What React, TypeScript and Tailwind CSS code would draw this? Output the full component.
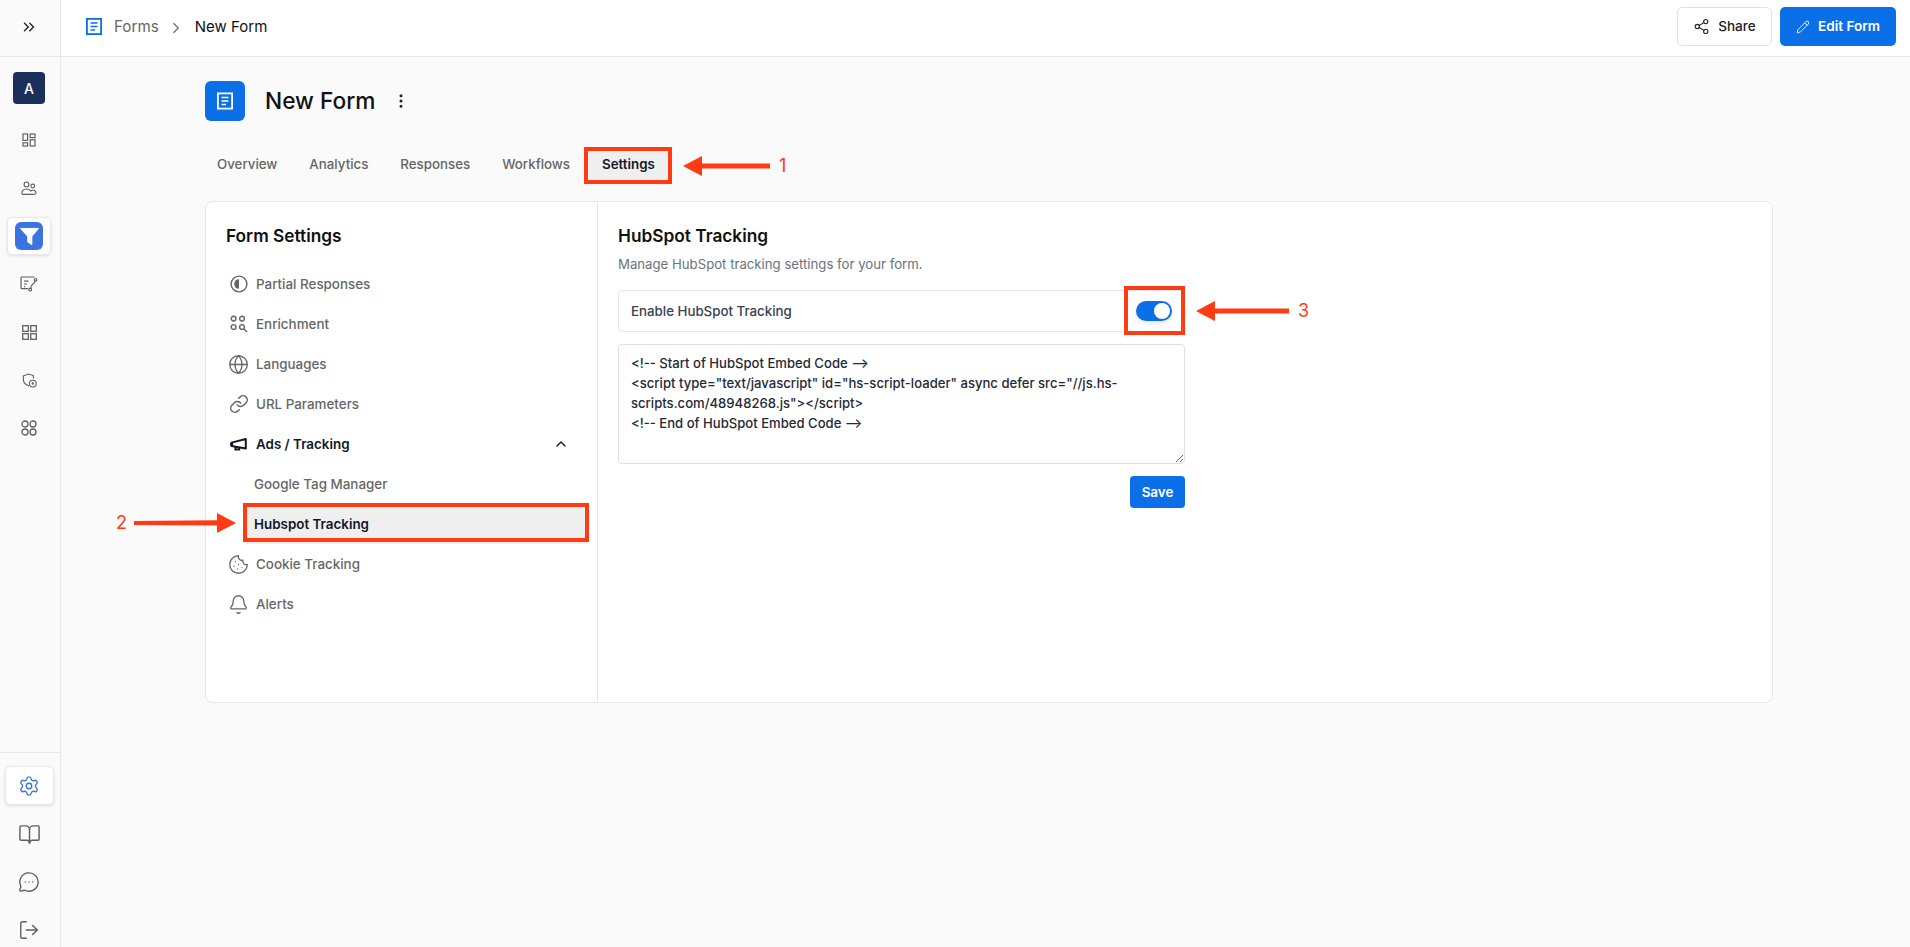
import React from 'react';
import {
  Bell,
  BookOpen,
  ChevronRight,
  ChevronUp,
  ChevronsRight,
  Cookie,
  Globe,
  Link,
  LogOut,
  MessageCircleMore,
  MoreVertical,
  Pencil,
  Settings,
  Share2,
} from 'lucide-react';

const FormDoc = ({ className }: { className?: string }) => (
  <svg viewBox="0 0 16 17" fill="none" className={className}>
    <rect x="0.9" y="0.9" width="14.2" height="15.2" stroke="currentColor" strokeWidth="1.8" />
    <path d="M4.5 5h7M4.5 8.5h7M4.5 12h4.5" stroke="currentColor" strokeWidth="1.5" />
  </svg>
);

const Dashboard = () => (
  <svg viewBox="0 0 14 14" fill="none" stroke="currentColor" strokeWidth="1.2" className="w-[14px] h-[14px]">
    <rect x="1" y="1" width="4.6" height="6.4" />
    <rect x="8.2" y="1" width="4.8" height="3.6" />
    <rect x="1" y="9.8" width="4.6" height="3.2" />
    <rect x="8.2" y="6.8" width="4.8" height="6.2" />
  </svg>
);

const People = () => (
  <svg viewBox="0 0 16 15" fill="none" stroke="currentColor" strokeWidth="1.1" className="w-[16px] h-[15px]">
    <circle cx="5.5" cy="3.4" r="2.4" />
    <circle cx="11.8" cy="5" r="1.9" />
    <path d="M1 13c-.6-3 1.6-5 4.5-5 2.2 0 3.6.8 4.2 2.4" />
    <path d="M1 13.4h9.4c1 0 4.6.2 4.6-1.4 0-1.7-1.6-2.8-3.4-2.8-1 0-1.6.3-2 .9" />
  </svg>
);

const FunnelSolid = () => (
  <svg viewBox="0 0 20 20" className="w-[19px] h-[19px]" fill="#fff">
    <path d="M0.5 1.5h19l-7 8.4v8.6l-4.4-2.6v-6z" strokeLinejoin="round" stroke="#fff" strokeWidth="1" />
  </svg>
);

const FormFlow = () => (
  <svg viewBox="0 0 18 16" fill="none" stroke="currentColor" strokeWidth="1.2" className="w-[18px] h-[16px]">
    <path d="M14.5 1H1.8a.8.8 0 0 0-.8.8v10a.8.8 0 0 0 .8.8H8" />
    <path d="M4 5.2h4.5M4 8h3M4 10.6h1" />
    <circle cx="15.6" cy="3.8" r="1.3" />
    <circle cx="10.2" cy="13.6" r="1.4" />
    <path d="M15 5.2c-.3 3-4 2.4-4.4 7" />
  </svg>
);

const Squares = () => (
  <svg viewBox="0 0 15 15" fill="none" stroke="currentColor" strokeWidth="1.3" className="w-[15px] h-[15px]">
    <rect x="0.7" y="0.7" width="5.6" height="5.6" />
    <rect x="8.7" y="0.7" width="5.6" height="5.6" />
    <rect x="0.7" y="8.7" width="5.6" height="5.6" />
    <rect x="8.7" y="8.7" width="5.6" height="5.6" />
  </svg>
);

const ShieldDot = () => (
  <svg viewBox="0 0 15 15" fill="none" stroke="currentColor" strokeWidth="1.1" className="w-[15px] h-[15px]">
    <path d="M7 13c-3-1-5.6-2.8-5.6-6.4V2.8L6.6 1l4.8 1.6v3" />
    <circle cx="10.8" cy="10.6" r="3.4" />
    <circle cx="10.8" cy="10.6" r=".7" />
  </svg>
);

const FourCircles = () => (
  <svg viewBox="0 0 16 16" fill="none" stroke="currentColor" strokeWidth="1.3" className="w-[16px] h-[16px]">
    <circle cx="4" cy="4" r="3" />
    <circle cx="12" cy="4" r="3" />
    <circle cx="4" cy="12" r="3" />
    <circle cx="12" cy="12" r="3" />
  </svg>
);

const HalfCircle = () => (
  <svg viewBox="0 0 18 18" fill="none" className="w-[18px] h-[18px]">
    <circle cx="9" cy="9" r="7.9" stroke="currentColor" strokeWidth="1.4" />
    <path d="M9 4.2a4.8 4.8 0 0 0 0 9.6z" fill="currentColor" />
  </svg>
);

const Enrichment = () => (
  <svg viewBox="0 0 18 18" fill="none" stroke="currentColor" strokeWidth="1.4" className="w-[18px] h-[18px]">
    <circle cx="3.6" cy="3.6" r="2.4" />
    <circle cx="12" cy="3.6" r="2.4" />
    <circle cx="3.6" cy="12" r="2.4" />
    <circle cx="12" cy="12" r="2.4" />
    <path d="M14 14l3 3" />
  </svg>
);

const Horn = () => (
  <svg viewBox="0 0 18 18" fill="none" stroke="currentColor" strokeWidth="2" className="w-[18px] h-[18px]">
    <path d="M1.6 7.6 15.8 4v9.6L1.6 11z" strokeLinejoin="round" />
    <path d="M1.6 8v3" strokeWidth="3" />
    <path d="M5.4 11.8v2.6h3.8v-1.4" />
  </svg>
);

const navItem = 'flex h-10 items-center text-[13.4px] font-medium text-[#666666]';
const navIcon = 'ml-[1px] mr-[6px] flex w-[23px] justify-center';
const railIcon = 'flex h-12 items-center justify-center text-[#5f5f64]';

const ArrowLeft = ({ width }: { width: number }) => (
  <svg width={width} height="20" viewBox={`0 0 ${width} 20`} fill="#ff3b14">
    <path d={`M0 10 19 0v7.4L${width} 7.6v5L19 12.6V20z`} />
  </svg>
);

const ArrowRight = () => (
  <svg width="102" height="20" viewBox="0 0 102 20" fill="#ff3b14">
    <path d="M0 8 83 7.2V0l19 10-19 10v-7.4L0 12z" />
  </svg>
);

export default function App() {
  return (
    <div className="relative flex h-[947px] w-[1910px] overflow-hidden bg-[#fafafa] font-['Inter',sans-serif] text-[#111111]">
      {/* rail */}
      <aside className="flex h-full w-[61px] shrink-0 flex-col border-r border-[#e8e8ea] bg-[#fafafa]">
        <div className="flex h-[57px] shrink-0 items-center justify-center border-b border-[#e8e8ea] pb-[3px] pr-[2px]">
          <ChevronsRight className="h-[18px] w-[18px] text-[#1f2937]" strokeWidth={2} />
        </div>
        <div className="flex flex-col items-center pr-[2px] pt-[15px]">
          <div className="flex h-8 w-8 items-center justify-center rounded-[4px] bg-[#1b2f5b] text-[14px] font-medium text-white">A</div>
          <div className="mt-[12px] flex w-full flex-col">
            <div className={railIcon}><Dashboard /></div>
            <div className={railIcon}><People /></div>
          </div>
          <div className="mt-[5px] flex h-[38px] w-[44px] items-center justify-center rounded-[5px] border border-[#e8e8ea] bg-white shadow-[0_1px_3px_rgba(0,0,0,0.12)]">
            <div className="flex h-7 w-7 items-center justify-center rounded-[6px] bg-[#3b73e0]"><FunnelSolid /></div>
          </div>
          <div className="mt-[5px] flex w-full flex-col">
            <div className={railIcon}><FormFlow /></div>
            <div className={railIcon}><Squares /></div>
            <div className={railIcon}><ShieldDot /></div>
            <div className={railIcon}><FourCircles /></div>
          </div>
        </div>
        <div className="mt-auto flex h-[195px] flex-col items-center overflow-hidden border-t border-[#e8e8ea] pr-[2px] pt-[13px]">
          <div className="flex h-[39px] w-[49px] shrink-0 items-center justify-center rounded-[5px] border border-[#e8e8ea] bg-white shadow-[0_1px_3px_rgba(0,0,0,0.12)]">
            <Settings className="h-[22px] w-[22px] text-[#3b73e0]" strokeWidth={1.5} />
          </div>
          <div className="mt-[5px] flex h-[48px] w-full shrink-0 items-center justify-center text-[#5f5f64]"><BookOpen className="h-[23px] w-[23px]" strokeWidth={1.5} /></div>
          <div className="flex h-[48px] w-full shrink-0 items-center justify-center text-[#5f5f64]"><MessageCircleMore className="h-[22px] w-[22px]" strokeWidth={1.5} /></div>
          <div className="flex h-[48px] w-full shrink-0 items-center justify-center text-[#5f5f64]"><LogOut className="h-[22px] w-[22px]" strokeWidth={1.5} /></div>
        </div>
      </aside>

      <div className="flex min-w-0 flex-1 flex-col">
        {/* topbar */}
        <header className="flex h-[57px] shrink-0 items-center border-b border-[#e8e8ea] bg-white pb-[1px] pl-[25px] pr-[14px]">
          <FormDoc className="mb-[2px] h-[17px] w-4 text-[#0b6fe8]" />
          <span className="ml-3 text-[15.2px] text-[#666666]">Forms</span>
          <ChevronRight className="ml-2 h-[18px] w-[18px] text-[#666666]" strokeWidth={1.5} />
          <span className="ml-[10px] text-[15px] text-[#111111]">New Form</span>
          <div className="mb-[2px] ml-auto flex items-center gap-2">
            <button className="flex h-[39px] w-[95px] items-center justify-center gap-2 rounded-[5px] border border-[#e2e2e4] bg-white text-[13.6px] font-medium text-[#222222]">
              <Share2 className="h-[17px] w-[17px]" strokeWidth={1.5} />
              Share
            </button>
            <button className="flex h-[39px] w-[116px] items-center justify-center gap-2 rounded-[5px] bg-[#0b6fe8] text-[13.6px] font-semibold text-white">
              <Pencil className="h-[14px] w-[14px]" strokeWidth={1.5} />
              Edit Form
            </button>
          </div>
        </header>

        <main className="ml-[144px] w-[1568px] pt-[24px]">
          <div className="flex h-10 items-center">
            <div className="flex h-10 w-10 items-center justify-center rounded-[6px] bg-[#0b6fe8]">
              <FormDoc className="h-[18px] w-4 text-white" />
            </div>
            <h1 className="ml-5 text-[22.7px] font-medium">New Form</h1>
            <MoreVertical className="ml-[17px] h-[18px] w-[18px] text-[#222222]" strokeWidth={2} />
          </div>

          <nav className="mt-[26px] flex h-9 items-center text-[13.3px] font-medium text-[#666666]">
            <span className="ml-3">Overview</span>
            <span className="ml-8">Analytics</span>
            <span className="ml-8">Responses</span>
            <span className="ml-8">Workflows</span>
            <span className="ml-[19px] rounded-[4px] bg-[#efefef] px-[13px] py-2 font-semibold text-[#111827]">Settings</span>
          </nav>

          <section className="mt-[18px] flex h-[502px] rounded-[8px] border border-[#e6e6e8] bg-white">
            <div className="w-[392px] shrink-0 border-r border-[#e6e6e8] pl-5 pr-[26px] pt-5">
              <h2 className="text-[17.3px] font-semibold leading-7">Form Settings</h2>
              <ul className="mt-[14px]">
                <li className={navItem}><span className={navIcon}><HalfCircle /></span>Partial Responses</li>
                <li className={navItem}><span className={navIcon}><Enrichment /></span>Enrichment</li>
                <li className={navItem}><span className={navIcon}><Globe className="h-[21px] w-[21px]" strokeWidth={1.5} /></span>Languages</li>
                <li className={navItem}><span className={navIcon}><Link className="h-[20px] w-[20px]" strokeWidth={1.8} /></span>URL Parameters</li>
                <li className="flex h-10 items-center text-[13.4px] font-semibold text-[#111827]">
                  <span className={navIcon}><Horn /></span>
                  Ads / Tracking
                  <ChevronUp className="ml-auto mr-[2px] h-4 w-4" strokeWidth={2} />
                </li>
                <li className="flex h-10 items-center pl-7 text-[13.4px] font-medium text-[#666666]">Google Tag Manager</li>
                <li className="ml-[21px] mr-[-15px] flex h-10 items-center bg-[#efefef] pl-[7px] text-[13.4px] font-semibold text-[#111827]">Hubspot Tracking</li>
                <li className={navItem}><span className={navIcon}><Cookie className="h-[21px] w-[21px]" strokeWidth={1.5} /></span>Cookie Tracking</li>
                <li className={navItem}><span className={navIcon}><Bell className="h-[21px] w-[21px]" strokeWidth={1.5} /></span>Alerts</li>
              </ul>
            </div>

            <div className="w-[588px] pl-5 pt-5">
              <h2 className="text-[17.3px] font-semibold leading-7">HubSpot Tracking</h2>
              <p className="mt-[4px] text-[13.2px] leading-5 text-[#6b7280]">Manage HubSpot tracking settings for your form.</p>
              <div className="mt-4 flex h-[42px] w-[567px] items-center justify-between rounded-[4px] border border-[#e6e6e8] pl-3 pr-3">
                <span className="pt-[1px] text-[13.3px] font-medium text-[#374151]">Enable HubSpot Tracking</span>
                <span className="flex h-5 w-9 items-center justify-end rounded-full bg-[#0b6fe8] p-[2px] shadow-[0_2px_4px_rgba(0,0,0,0.1)]">
                  <span className="h-4 w-4 rounded-full bg-white" />
                </span>
              </div>
              <textarea
                readOnly
                className="mt-3 block h-[120px] w-[567px] rounded-[4px] border border-[#e0e0e3] px-3 py-2 text-[13.1px] font-medium leading-5 text-[#1f2937] outline-none"
                defaultValue={`<!-- Start of HubSpot Embed Code -->\n<script type="text/javascript" id="hs-script-loader" async defer src="//js.hs-scripts.com/48948268.js"></script>\n<!-- End of HubSpot Embed Code -->`}
              />
              <div className="mt-3 flex w-[567px] justify-end">
                <button className="flex h-8 w-[55px] items-center justify-center rounded-[4px] bg-[#0b6fe8] text-[13.4px] font-semibold text-white">Save</button>
              </div>
            </div>
          </section>
        </main>
      </div>

      {/* red annotations drawn over the page */}
      <div className="pointer-events-none absolute left-[584px] top-[147px] h-[37px] w-[88px] border-4 border-[#ff3b14]" />
      <div className="absolute left-[683px] top-[156px] flex items-center">
        <ArrowLeft width={87} />
        <span className="ml-[9px] text-[18px] leading-5 text-[#ff3b14]">1</span>
      </div>
      <div className="pointer-events-none absolute left-[243px] top-[503px] h-[39px] w-[346px] border-4 border-[#ff3b14]" />
      <div className="absolute left-[116px] top-[513px] flex items-center">
        <span className="mr-[7px] w-[11px] text-[18px] leading-5 text-[#ff3b14]">2</span>
        <ArrowRight />
      </div>
      <div className="pointer-events-none absolute left-[1124px] top-[286px] h-[49px] w-[61px] border-4 border-[#ff3b14]" />
      <div className="absolute left-[1196px] top-[301px] flex items-center">
        <ArrowLeft width={93} />
        <span className="ml-[9px] text-[18px] leading-5 text-[#ff3b14]">3</span>
      </div>
    </div>
  );
}
